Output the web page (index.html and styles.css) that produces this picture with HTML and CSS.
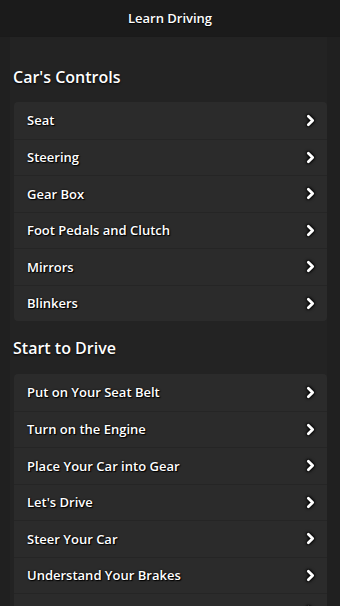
FILE: index.html
```html
<!DOCTYPE html>
<html>
<head>
<meta charset="utf-8">
<link rel="stylesheet" href="styles.css">
</head>
<body>
<header class="topbar">Learn Driving</header>
<main class="content">
  <h2 class="section-title">Car's Controls</h2>
  <ul class="list">
    <li class="item"><span>Seat</span><svg class="chev" viewBox="0 0 10 12"><path d="M3 2l4 4-4 4"/></svg></li>
    <li class="item"><span>Steering</span><svg class="chev" viewBox="0 0 10 12"><path d="M3 2l4 4-4 4"/></svg></li>
    <li class="item"><span>Gear Box</span><svg class="chev" viewBox="0 0 10 12"><path d="M3 2l4 4-4 4"/></svg></li>
    <li class="item"><span>Foot Pedals and Clutch</span><svg class="chev" viewBox="0 0 10 12"><path d="M3 2l4 4-4 4"/></svg></li>
    <li class="item"><span>Mirrors</span><svg class="chev" viewBox="0 0 10 12"><path d="M3 2l4 4-4 4"/></svg></li>
    <li class="item"><span>Blinkers</span><svg class="chev" viewBox="0 0 10 12"><path d="M3 2l4 4-4 4"/></svg></li>
  </ul>
  <h2 class="section-title">Start to Drive</h2>
  <ul class="list">
    <li class="item"><span>Put on Your Seat Belt</span><svg class="chev" viewBox="0 0 10 12"><path d="M3 2l4 4-4 4"/></svg></li>
    <li class="item"><span>Turn on the Engine</span><svg class="chev" viewBox="0 0 10 12"><path d="M3 2l4 4-4 4"/></svg></li>
    <li class="item"><span>Place Your Car into Gear</span><svg class="chev" viewBox="0 0 10 12"><path d="M3 2l4 4-4 4"/></svg></li>
    <li class="item"><span>Let's Drive</span><svg class="chev" viewBox="0 0 10 12"><path d="M3 2l4 4-4 4"/></svg></li>
    <li class="item"><span>Steer Your Car</span><svg class="chev" viewBox="0 0 10 12"><path d="M3 2l4 4-4 4"/></svg></li>
    <li class="item"><span>Understand Your Brakes</span><svg class="chev" viewBox="0 0 10 12"><path d="M3 2l4 4-4 4"/></svg></li>
    <li class="item"><span></span><svg class="chev" viewBox="0 0 10 12"><path d="M3 2l4 4-4 4"/></svg></li>
  </ul>
</main>
</body>
</html>
```
FILE: styles.css
```css
html, body {
  margin: 0;
  padding: 0;
  background: #202020;
  height: 100%;
  overflow: hidden;
}
body {
  font-family: "Open Sans", "DejaVu Sans", sans-serif;
  color: #fff;
}
.topbar {
  height: 37px;
  background: #1b1b1b;
  display: flex;
  align-items: center;
  justify-content: center;
  font-size: 13px;
  font-weight: 600;
  text-shadow: 0 1px 1px #000;
  border-bottom: 1px solid #1a1a1a;
  box-sizing: border-box;
}
.content {
  margin: 0 13px 0 10px;
  background: #232323;
  padding: 0 0 20px 3px;
}
.section-title {
  margin: 0;
  padding: 27px 0 14px 0;
  font-size: 16px;
  font-weight: 600;
  line-height: 22px;
  text-shadow: 0 1px 2px #000;
}
.content > .section-title:first-child { padding-top: 29px; }
.content > .list + .section-title { padding-top: 16px; padding-bottom: 15px; }
.list {
  list-style: none;
  margin: 0 0 0 1px;
  padding: 0;
  background: #2b2b2b;
  border-radius: 4px;
}
.item {
  height: 36.5px;
  box-sizing: border-box;
  display: flex;
  align-items: center;
  justify-content: space-between;
  padding: 0 11px 0 13px;
  border-top: 1px solid #252525;
  font-size: 13px;
  font-weight: 600;
  text-shadow: 1px 1px 1px #000, 0 0 2px #000;
}
.item:first-child { border-top: none; }
.chev {
  width: 11px;
  height: 13px;
  fill: none;
  stroke: #fff;
  stroke-width: 2.6;
  stroke-linecap: round;
  stroke-linejoin: round;
  filter: drop-shadow(0 0 1.5px #000) drop-shadow(0 0 1px #000);
}
```
